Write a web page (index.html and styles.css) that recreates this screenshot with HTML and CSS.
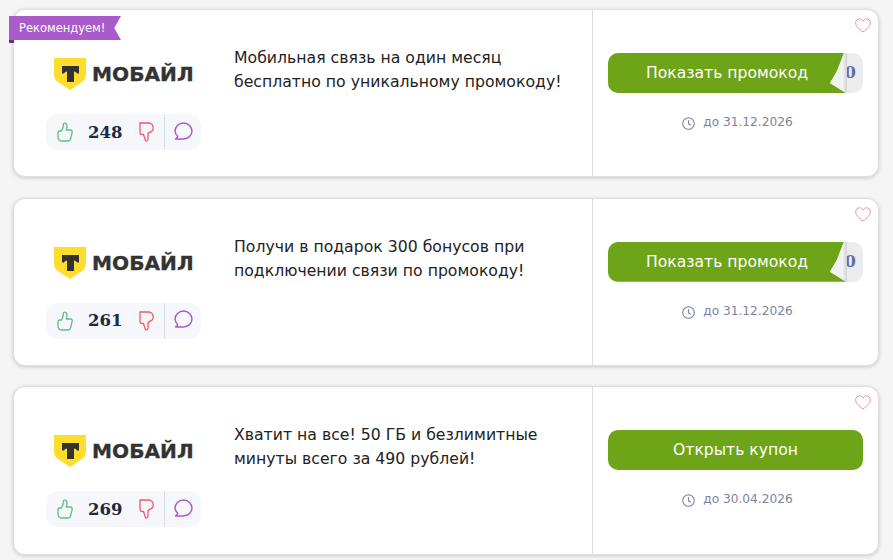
FILE: index.html
```html
<!DOCTYPE html>
<html lang="ru">
<head>
    <meta charset="UTF-8">
    <title>Промокоды</title>
    <link rel="stylesheet" href="styles.css">
</head>
<body>
    <svg class="sprite" aria-hidden="true">
        <symbol id="logo-shield" viewBox="0 0 32 32">
            <path fill="#ffdd2d" d="M0 0H32V16C32 20.500 30 23 26.500 25L16 32L5.500 25C2 23 0 20.500 0 16Z"/>
            <path fill="#333" d="M8 8H25V15.500H23C22.500 14.500 21.500 13.500 20 13.500V24H13V13.500C11.500 13.500 10.500 14.500 10 15.500H8Z"/>
        </symbol>
        <symbol id="thumb-up" viewBox="0 0 16 20">
            <path fill="none" stroke-width="1.300" stroke-linejoin="round" d="M1 10.500C1 9.500 2 9 3 9H4.500C5.500 7.500 6.500 5 6.500 1.500C8.500 .5 10 2 10 4C10 5.500 9.500 7 9.200 8H13.500C15 8 15.500 9.500 15 11L13.500 17C13.200 18.300 12 19 11 19H5C2.500 19 1 17.500 1 15Z"/>
        </symbol>
        <symbol id="thumb-down" viewBox="0 0 15 20">
            <path fill="none" stroke-width="1.300" stroke-linejoin="round" d="M1 1H9.500C12.500 1 14.200 3 14.200 6C14.200 8.500 12.500 10 10.200 10.500L9 12V17C9 18.500 7.500 19.500 6.500 18.500L5.800 16.500L4.500 12.500H3C1.800 12.500 1 11.700 1 10.500Z"/>
        </symbol>
        <symbol id="comment" viewBox="0 0 18 18">
            <path fill="none" stroke-width="1.400" stroke-linejoin="round" d="M3.500 13.500C2 12.200 1 10.500 1 8.500C1 4.500 4.500 1 9 1C13.500 1 17 4.500 17 8.500C17 12.800 13.500 16 9 16H1.500C2.500 15.500 3.300 14.500 3.500 13.500Z"/>
        </symbol>
        <symbol id="heart" viewBox="0 0 16 15">
            <path fill="none" stroke="#ee8f96" d="M8 14C4 11 .7 8.500 .7 4.800C.7 2.500 2.500 .8 4.500 .8C6 .8 7.300 1.700 8 3C8.700 1.700 10 .8 11.500 .8C13.500 .8 15.300 2.500 15.300 4.800C15.300 8.500 12 11 8 14Z"/>
        </symbol>
        <symbol id="clock" viewBox="0 0 12 12">
            <circle cx="6" cy="6" r="5.300" fill="none" stroke="#7c82a0"/>
            <path fill="none" stroke="#7c82a0" d="M6 3V6.300L8.300 7.500"/>
        </symbol>
    </svg>

    <main class="list">
        <!-- Card 1 -->
        <article class="card">
            <div class="ribbon">Рекомендуем!</div>
            <svg class="heart"><use href="#heart"/></svg>
            <div class="card-left">
                <div class="logo">
                    <svg class="logo-icon"><use href="#logo-shield"/></svg>
                    <span class="logo-text">МОБАЙЛ</span>
                </div>
                <div class="rating">
                    <svg class="thumb thumb-up"><use href="#thumb-up"/></svg>
                    <span class="count">248</span>
                    <svg class="thumb thumb-down"><use href="#thumb-down"/></svg>
                    <span class="rating-line"></span>
                    <svg class="comment"><use href="#comment"/></svg>
                </div>
            </div>
            <p class="card-text">Мобильная связь на один месяц<br>бесплатно по уникальному промокоду!</p>
            <div class="card-right">
                <a href="#" class="btn btn-promo">
                    <span class="btn-label">Показать промокод</span>
                    <span class="promo-code">0</span>
                    <span class="promo-fold"></span>
                </a>
                <div class="date"><svg class="clock"><use href="#clock"/></svg>до 31.12.2026</div>
            </div>
        </article>

        <!-- Card 2 -->
        <article class="card">
            <svg class="heart"><use href="#heart"/></svg>
            <div class="card-left">
                <div class="logo">
                    <svg class="logo-icon"><use href="#logo-shield"/></svg>
                    <span class="logo-text">МОБАЙЛ</span>
                </div>
                <div class="rating">
                    <svg class="thumb thumb-up"><use href="#thumb-up"/></svg>
                    <span class="count">261</span>
                    <svg class="thumb thumb-down"><use href="#thumb-down"/></svg>
                    <span class="rating-line"></span>
                    <svg class="comment"><use href="#comment"/></svg>
                </div>
            </div>
            <p class="card-text">Получи в подарок 300 бонусов при<br>подключении связи по промокоду!</p>
            <div class="card-right">
                <a href="#" class="btn btn-promo">
                    <span class="btn-label">Показать промокод</span>
                    <span class="promo-code">0</span>
                    <span class="promo-fold"></span>
                </a>
                <div class="date"><svg class="clock"><use href="#clock"/></svg>до 31.12.2026</div>
            </div>
        </article>

        <!-- Card 3 -->
        <article class="card">
            <svg class="heart"><use href="#heart"/></svg>
            <div class="card-left">
                <div class="logo">
                    <svg class="logo-icon"><use href="#logo-shield"/></svg>
                    <span class="logo-text">МОБАЙЛ</span>
                </div>
                <div class="rating">
                    <svg class="thumb thumb-up"><use href="#thumb-up"/></svg>
                    <span class="count">269</span>
                    <svg class="thumb thumb-down"><use href="#thumb-down"/></svg>
                    <span class="rating-line"></span>
                    <svg class="comment"><use href="#comment"/></svg>
                </div>
            </div>
            <p class="card-text">Хватит на все! 50 ГБ и безлимитные<br>минуты всего за 490 рублей!</p>
            <div class="card-right">
                <a href="#" class="btn">
                    <span class="btn-label">Открыть купон</span>
                </a>
                <div class="date"><svg class="clock"><use href="#clock"/></svg>до 30.04.2026</div>
            </div>
        </article>
    </main>
</body>
</html>
```

FILE: styles.css
```css
body {
    background-color: #f5f5f5;
    font-family: "DejaVu Sans", sans-serif;
    margin: 0;
    padding: 0;
    height: 560px;
    overflow: hidden;
}

.sprite {
    display: none;
}

.list {
    display: flex;
    flex-direction: column;
    gap: 20.400px;
    padding: 9px 14px 0 13px;
}

/* Card */
.card {
    position: relative;
    box-sizing: border-box;
    height: 168.300px;
    display: grid;
    grid-template-columns: 220px 1fr 286px;
    background-color: #fff;
    border: 1px solid #dedede;
    border-radius: 12px;
    box-shadow: 0 1px 4px rgba(0, 0, 0, 0.18);
}

.ribbon {
    position: absolute;
    left: -5px;
    top: 6px;
    width: 112px;
    height: 24px;
    box-sizing: border-box;
    padding-left: 10px;
    background-color: #a95bc9;
    color: #fff;
    font-size: 11.500px;
    line-height: 24px;
    clip-path: polygon(0 0, 100% 0, 94% 50%, 100% 100%, 0 100%);
}

.card:first-child::before {
    content: "";
    position: absolute;
    left: -5px;
    top: 30px;
    width: 5px;
    height: 3px;
    background-color: #6d2a8c;
}

.heart {
    position: absolute;
    right: 7px;
    top: 8px;
    width: 16px;
    height: 15px;
}

/* Left column */
.card-left {
    display: flex;
    flex-direction: column;
    padding: 48px 0 0 32px;
}

.logo {
    display: flex;
    align-items: center;
    gap: 6px;
    margin-left: 8px;
    height: 32px;
}

.logo-icon {
    width: 32px;
    height: 32px;
}

.logo-text {
    font-weight: bold;
    font-size: 19px;
    color: #333;
    transform: scaleX(1.060);
    transform-origin: left center;
    -webkit-text-stroke: 0.300px #333;
}

.rating {
    display: flex;
    align-items: center;
    width: 155px;
    height: 36px;
    margin-top: 24px;
    background-color: #f5f7fb;
    border-radius: 12px;
}

.thumb {
    width: 16px;
    height: 20px;
}

.thumb-up {
    margin-left: 11px;
    stroke: #62bd84;
}

.thumb-down {
    width: 15px;
    stroke: #f0596c;
}

.count {
    width: 35px;
    margin: 0 16px 0 15px;
    font-family: "DejaVu Serif", serif;
    font-weight: bold;
    font-size: 16.500px;
    color: #1e2a3f;
}

.rating-line {
    width: 1px;
    height: 36px;
    margin: 0 9px 0 10px;
    background-color: #d8dde6;
}

.comment {
    width: 19px;
    height: 19px;
    margin-bottom: 2px;
    stroke: #a95bc9;
}

/* Text */
.card-text {
    margin: 36px 0 0;
    font-size: 15.700px;
    line-height: 24px;
    color: #222;
}

/* Right column */
.card-right {
    border-left: 1px solid #dcdcdc;
    padding: 43px 15px 0;
}

.btn {
    position: relative;
    display: block;
    height: 40px;
    border-radius: 10px;
    background-color: #6ea417;
    color: #fff;
    font-size: 15.600px;
    line-height: 40px;
    text-align: center;
    text-decoration: none;
    overflow: hidden;
}

.btn-promo {
    background-color: #ececef;
    text-align: left;
}

.btn-promo .btn-label {
    display: block;
    width: 238px;
    height: 40px;
    padding-left: 38px;
    box-sizing: border-box;
    background-color: #6ea417;
    clip-path: polygon(0 0, 236px 0, 229px 18px, 222px 30px, 238px 40px, 0 100%);
}

.promo-code {
    position: absolute;
    right: 7px;
    top: 0;
    font-family: "DejaVu Serif", serif;
    font-weight: bold;
    font-size: 16px;
    color: #646d9c;
}

/* загнутый уголок */
.promo-fold {
    position: absolute;
    left: 222px;
    top: 0;
    width: 17px;
    height: 40px;
    background: linear-gradient(90deg, #f1f1f1 75%, #d0d0d4);
    clip-path: polygon(14px 0, 17px 0, 17px 40px, 16px 40px, 8px 35px, 0 30px, 7px 18px);
}

.date {
    display: flex;
    justify-content: center;
    align-items: center;
    gap: 8px;
    margin: 20px 0 0 4px;
    font-size: 12.200px;
    line-height: 18px;
    color: #7c82a0;
}

.clock {
    width: 13px;
    height: 13px;
    margin-top: 3px;
}
```
